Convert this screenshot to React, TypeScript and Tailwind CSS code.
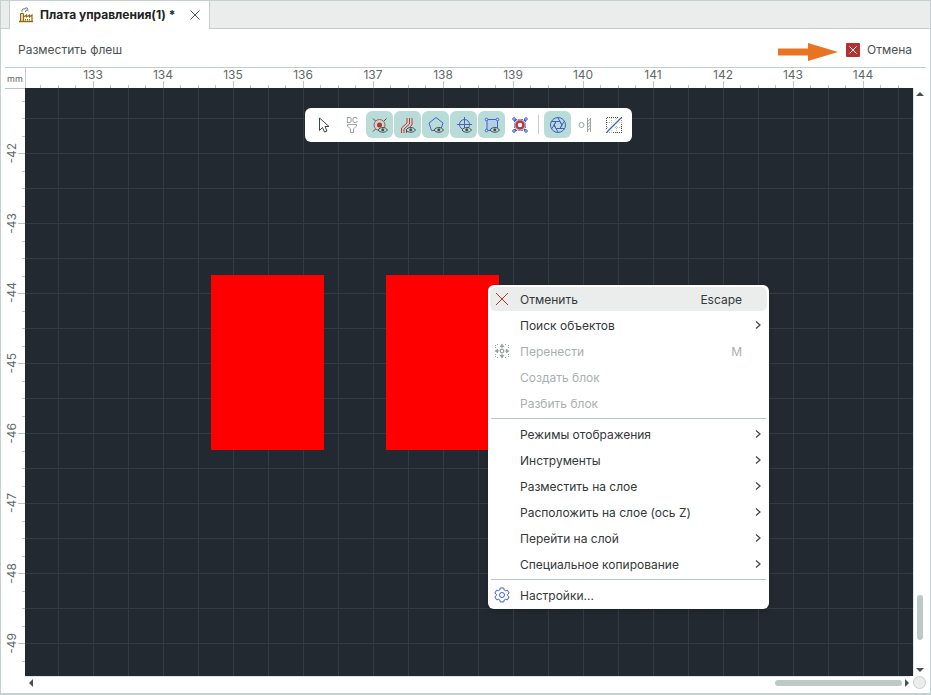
import React from 'react';

const columns = ['133', '134', '135', '136', '137', '138', '139', '140', '141', '142', '143', '144', ''];
const rows = ['-42', '-43', '-44', '-45', '-46', '-47', '-48', '-49'];

const searchItems = [
  { label: 'Отменить', shortcut: 'Escape', icon: <CancelIcon />, active: true },
  { label: 'Поиск объектов', submenu: true },
  { label: 'Перенести', shortcut: 'M', icon: <MoveIcon />, disabled: true },
  { label: 'Создать блок', disabled: true },
  { label: 'Разбить блок', disabled: true },
];

const layerItems = [
  { label: 'Режимы отображения', submenu: true },
  { label: 'Инструменты', submenu: true },
  { label: 'Разместить на слое', submenu: true },
  { label: 'Расположить на слое (ось Z)', submenu: true },
  { label: 'Перейти на слой', submenu: true },
  { label: 'Специальное копирование', submenu: true },
];

const settingsItems = [{ label: 'Настройки...', icon: <GearIcon /> }];

const tools = [
  { label: 'Выбор', icon: <CursorIcon /> },
  { label: 'Фильтр DC', icon: <FilterIcon /> },
  { label: 'Контактные площадки', icon: <PadIcon />, on: true },
  { label: 'Трассы', icon: <TracksIcon />, on: true },
  { label: 'Полигоны', icon: <PolygonIcon />, on: true },
  { label: 'Отверстия', icon: <CrosshairIcon />, on: true },
  { label: 'Области', icon: <AreaIcon />, on: true },
  { label: 'Привязка', icon: <SnapIcon /> },
];

const viewTools = [
  { label: 'Апертура', icon: <ApertureIcon />, on: true },
  { label: 'Зазоры', icon: <GapIcon /> },
  { label: 'Сетка', icon: <GridOffIcon /> },
];

function FactoryIcon() {
  return (
    <svg width="16" height="16" viewBox="0 0 16 16" fill="none">
      <path d="M4 4.500C3.500 2.500 5 1.500 6.500 2 7.500.3 9.500.5 10 2.500M7.500 5c0-2 2-2.500 3-1" stroke="#56605f" />
      <path d="M2.500 14V6.500h3V14" fill="#ead7a8" stroke="#94690f" />
      <path d="M1 14.500h14" stroke="#94690f" strokeWidth="1.500" />
      <path d="M5.500 10 8.500 8v2l3-2v2l2.500-2V14" stroke="#94690f" strokeWidth="1.200" />
      <path d="M7.500 12v1.500M9.500 12v1.500M11.500 12v1.500" stroke="#94690f" />
    </svg>
  );
}

function CloseIcon() {
  return (
    <svg width="10" height="10" viewBox="0 0 10 10" stroke="#4c5655">
      <path d="m.5.5 9 9M9.500.5l-9 9" />
    </svg>
  );
}

function CancelIcon() {
  return (
    <svg width="14" height="14" viewBox="0 0 14 14" stroke="#b8312f">
      <path d="m1 1 12 12M13 1 1 13" />
    </svg>
  );
}

function MoveIcon() {
  return (
    <svg width="16" height="16" viewBox="0 0 16 16" fill="#98a3a2">
      <path d="M8 .5 10.500 4H8.500v1.500h-1V4h-2zM8 15.500 10.500 12H8.500v-1.500h-1V12h-2zM.5 8 4 5.500v2h1.500v1H4v2zM15.500 8 12 5.500v2h-1.500v1H12v2z" />
      <path d="M6.500 6.500h3v3h-3z" fill="none" stroke="#98a3a2" />
      <path d="M1.500 5V1M3 1.500h2M11 1.500h2M14.500 5V1M1.500 11v4M3 14.500h2M11 14.500h2M14.500 11v4" fill="none" stroke="#98a3a2" strokeDasharray="1 1" />
    </svg>
  );
}

function GearIcon() {
  return (
    <svg width="16" height="16" viewBox="0 0 16 16" fill="none" stroke="#4360cc">
      <path d="M6.300 1h3.400l.5 2 1.200.7 2-.6 1.700 3-1.500 1.400v1l1.500 1.400-1.700 3-2-.6-1.200.7-.5 2H6.300l-.5-2-1.200-.7-2 .6-1.700-3 1.500-1.400v-1L.9 6.100l1.700-3 2 .6 1.200-.7z" strokeLinejoin="round" />
      <circle cx="8" cy="8" r="2.500" />
    </svg>
  );
}

function ChevronIcon() {
  return (
    <svg width="6" height="8" viewBox="0 0 6 8" fill="none" stroke="#3c4645" strokeWidth="1.200">
      <path d="m1 .5 4 3.500-4 3.500" />
    </svg>
  );
}

function Eye() {
  return (
    <g>
      <path d="M7 14c2.200-3.400 7.300-3.400 9.500 0-2.200 3-7.300 3-9.500 0z" fill="#b9dcd8" stroke="#46504f" />
      <circle cx="11.750" cy="13.800" r="1.500" fill="#46504f" stroke="none" />
    </g>
  );
}

function CursorIcon() {
  return (
    <svg width="18" height="18" viewBox="0 0 18 18" fill="none" stroke="#3c4645">
      <path d="M4.500 2v12.500l3-3 2 4.500 2.500-1-2-4.500h4z" />
    </svg>
  );
}

function FilterIcon() {
  return (
    <svg width="18" height="18" viewBox="0 0 18 18" fill="none" stroke="#98a3a2">
      <text x="9" y="7" textAnchor="middle" fontSize="8" fill="#7f8a89" stroke="none">DC</text>
      <path d="M4.500 8.500h9V10l-3 3v3.500h-3V13l-3-3z" />
    </svg>
  );
}

function PadIcon() {
  return (
    <svg width="18" height="18" viewBox="0 0 18 18" fill="none">
      <path d="m2 2.500 2.500 2.500M15.500 2.500 13 5M2 15.500 4.500 13" stroke="#46504f" />
      <circle cx="8.500" cy="9" r="5.500" stroke="#c0504c" />
      <circle cx="8.500" cy="9" r="2.500" fill="#c92a28" />
      <Eye />
    </svg>
  );
}

function TracksIcon() {
  return (
    <svg width="18" height="18" viewBox="0 0 18 18" fill="none" stroke="#c03a37">
      <path d="M2.500 17v-5l5.500-5V2M5 17v-4l5.500-5V2M7.500 17v-3L13 9V2" />
      <Eye />
    </svg>
  );
}

function PolygonIcon() {
  return (
    <svg width="18" height="18" viewBox="0 0 18 18" fill="none" stroke="#4360cc">
      <path d="M9 1.500 16 7l-2.500 7.500h-9L2 7z" />
      <Eye />
    </svg>
  );
}

function CrosshairIcon() {
  return (
    <svg width="18" height="18" viewBox="0 0 18 18" fill="none" stroke="#4360cc">
      <circle cx="9.500" cy="8.500" r="5" />
      <path d="M9.500 1v14M2 8.500h15" />
      <Eye />
    </svg>
  );
}

function AreaIcon() {
  return (
    <svg width="18" height="18" viewBox="0 0 18 18" fill="none" stroke="#4360cc">
      <path d="M4 3.500h10.500v11H4z" fill="#afd0e6" />
      <g fill="#dbe8f5">
        <circle cx="3.500" cy="3.500" r="1.300" />
        <circle cx="14.500" cy="3.500" r="1.300" />
        <circle cx="3.500" cy="14.500" r="1.300" />
      </g>
      <Eye />
    </svg>
  );
}

function SnapIcon() {
  return (
    <svg width="18" height="18" viewBox="0 0 18 18" fill="none" stroke="#4360cc">
      <path d="m3 3 12 12M15 3 3 15" />
      <path d="M4 3.500h10M4 14.500h10M3.500 4v10M14.500 4v10" strokeDasharray="2 1" />
      <g fill="#dbe3f7">
        <circle cx="3" cy="3" r="1.300" />
        <circle cx="15" cy="3" r="1.300" />
        <circle cx="3" cy="15" r="1.300" />
        <circle cx="15" cy="15" r="1.300" />
      </g>
      <circle cx="9" cy="9" r="5.500" fill="#e3e8f7" stroke="#8fa0de" />
      <circle cx="9" cy="9" r="3.500" fill="#fff" stroke="#c23230" strokeWidth="2.500" />
    </svg>
  );
}

function ApertureIcon() {
  return (
    <svg width="18" height="18" viewBox="0 0 18 18" fill="none" stroke="#3f5fc4">
      <circle cx="9" cy="9" r="7.500" />
      <path d="M7 5.500h4L13 9l-2 3.500H7L5 9z" />
      <path d="M11 5.500H3M13 9 9 2M11 12.500 15 5.500M7 12.500h8M5 9l4 7M7 5.500 3 12.500" />
    </svg>
  );
}

function GapIcon() {
  return (
    <svg width="18" height="18" viewBox="0 0 18 18" fill="none" stroke="#98a3a2">
      <circle cx="4.500" cy="9" r="2.500" />
      <path d="M10.500 2v14M13.500 2v14" />
      <path d="m10.500 5.500 3-2.500m-3 5.500 3-2.500m-3 5.500 3-2.500m-3 5.500 3-2.500" />
    </svg>
  );
}

function GridOffIcon() {
  return (
    <svg width="18" height="18" viewBox="0 0 18 18" fill="none">
      <path d="M2 1.500h15M2 16.500h15M1.500 2v15M16.500 2v15" stroke="#46504f" strokeDasharray="1 1" />
      <path d="M2 6.500h15M2 11.500h15M6.500 2v15M11.500 2v15" stroke="#b4bbba" strokeDasharray="1 1" />
      <path d="M2 16 16 2" stroke="#fff" strokeWidth="4" />
      <path d="M2 16 16 2" stroke="#4360cc" strokeWidth="1.300" />
    </svg>
  );
}

function ToolButton({ tool }: { tool: any }) {
  return (
    <button
      type="button"
      aria-label={tool.label}
      className={`flex size-[27px] items-center justify-center rounded-md ${tool.on ? 'bg-[#b9dcd8]' : ''}`}
    >
      {tool.icon}
    </button>
  );
}

function MenuItem({ item }: { item: any }) {
  return (
    <button
      type="button"
      role="menuitem"
      disabled={item.disabled}
      className={`flex h-6 w-full items-center rounded-md pr-[6px] text-left ${item.active ? 'bg-[#ebedec]' : ''} ${item.disabled ? 'text-[#a8b0af]' : 'text-[#333838]'}`}
    >
      <span className="flex w-6 justify-center">{item.icon}</span>
      <span className="ml-1.5 flex-1 pt-px">{item.label}</span>
      {item.shortcut && <span className="mr-[13px] pt-px">{item.shortcut}</span>}
      <span className="w-1.5">{item.submenu && <ChevronIcon />}</span>
    </button>
  );
}

function ContextMenu() {
  return (
    <div role="menu" className="absolute top-[197px] left-[463px] flex w-[281px] flex-col gap-0.5 rounded-md bg-white p-0.5 text-[12px] leading-5 shadow-md">
      {searchItems.map((item) => (
        <MenuItem key={item.label} item={item} />
      ))}
      <hr className="mx-px my-px border-[#b9c7c5]" />
      {layerItems.map((item) => (
        <MenuItem key={item.label} item={item} />
      ))}
      <hr className="mx-px my-px border-[#b9c7c5]" />
      {settingsItems.map((item) => (
        <MenuItem key={item.label} item={item} />
      ))}
    </div>
  );
}

function TopRuler() {
  return (
    <div className="flex h-[20px] min-w-0 flex-1 overflow-hidden border-l border-[#c3cfce]">
      <svg className="h-5 w-8 shrink-0" stroke="#b9c7c5">
        <path d="M14.500 17v3" />
      </svg>
      {columns.map((label) => (
        <div key={label} className="flex w-[70px] shrink-0 flex-col items-center justify-between">
          <span className="h-3 pt-px leading-3">{label}</span>
          <svg className="h-[7px] w-full shrink-0" stroke="#b9c7c5">
            <path d="M.5 4v3M17.500 4v3M35.500 0v7M52.500 4v3" />
          </svg>
        </div>
      ))}
    </div>
  );
}

function LeftRuler() {
  return (
    <div className="flex w-6 shrink-0 flex-col overflow-hidden">
      <svg className="h-[30px] w-full shrink-0" stroke="#b9c7c5">
        <path d="M4 .5h20M21 13.500h3" />
      </svg>
      {rows.map((label) => (
        <div key={label} className="flex h-[70px] shrink-0 items-center justify-end">
          <span className="rotate-180 leading-3 [writing-mode:vertical-rl]">{label}</span>
          <svg className="h-full w-[7px] shrink-0" stroke="#b9c7c5">
            <path d="M4 .5h3M4 18.500h3M0 35.500h7M4 53.500h3" />
          </svg>
        </div>
      ))}
    </div>
  );
}

function Canvas() {
  return (
    <main className="relative min-w-0 flex-1 overflow-hidden bg-[#222930] bg-[linear-gradient(to_right,#343c43_1px,transparent_1px),linear-gradient(to_bottom,#343c43_1px,transparent_1px)] bg-[size:35px_35px] bg-[position:33px_30px]">
      <div className="absolute top-[187px] left-[186px] h-[175px] w-[113px] bg-[#ff0000]" />
      <div className="absolute top-[187px] left-[361px] h-[175px] w-[113px] bg-[#ff0000]" />
      <div className="absolute inset-x-0 top-5 flex justify-center pr-px">
        <div role="toolbar" className="flex gap-px rounded-md bg-white px-[5px] pt-[3px] pb-1">
          {tools.map((tool) => (
            <ToolButton key={tool.label} tool={tool} />
          ))}
          <div className="mx-1 my-1 w-px bg-[#c3cfce]" />
          {viewTools.map((tool) => (
            <ToolButton key={tool.label} tool={tool} />
          ))}
        </div>
      </div>
      <ContextMenu />
    </main>
  );
}

export default function App() {
  return (
    <div className="flex h-screen w-full flex-col border border-b-2 border-[#c5d1d0] bg-white font-['Inter','Liberation_Sans',sans-serif] text-[12px] text-[#4a5352]">
      <header className="flex h-7 shrink-0 bg-[#ebedec]">
        <div className="w-2 border-b border-[#c3cfce]" />
        <div className="flex items-center border-x border-[#c3cfce] bg-white px-2">
          <FactoryIcon />
          <span className="ml-1.5 font-bold text-[#1d2222]">Плата управления(1) *</span>
          <button type="button" aria-label="Закрыть" className="mr-px ml-[15px]">
            <CloseIcon />
          </button>
        </div>
        <div className="flex-1 border-b border-[#c3cfce]" />
      </header>

      <div className="mx-1 flex h-[39px] shrink-0 items-center border-b border-[#c3cfce] pt-1 pr-3.5 pl-[13px]">
        <span className="flex-1">Разместить флеш</span>
        <svg width="60" height="18" viewBox="0 0 60 18" fill="#e87422" className="mt-1 mr-2">
          <path d="M0 5.500h30V0l30 9-30 9v-5.500H0z" />
        </svg>
        <button type="button" className="flex items-center gap-[7px]">
          <svg width="14" height="14" viewBox="0 0 14 14" stroke="#fff">
            <rect width="14" height="14" rx="1" fill="#b23230" stroke="none" />
            <path d="m3.500 3.500 7 7M10.500 3.500l-7 7" />
          </svg>
          <span>Отмена</span>
        </button>
      </div>

      <div className="flex shrink-0 pr-4 text-[#5f6968]">
        <div className="w-6 pt-[3px] pl-1 text-center text-[9px] leading-4">mm</div>
        <TopRuler />
      </div>

      <div className="flex min-h-0 flex-1">
        <div className="flex text-[#5f6968]">
          <LeftRuler />
        </div>
        <Canvas />
        <div className="flex w-[17px] shrink-0 flex-col items-center border-l border-[#dfe6e5] pr-1">
          <svg width="8" height="4" viewBox="0 0 8 4" fill="#46504f" className="mt-1">
            <path d="M4 0 8 4H0z" />
          </svg>
          <div className="flex-1" />
          <div className="h-[45px] w-1.5 rounded-full bg-[#bdc8c7]" />
          <svg width="8" height="4" viewBox="0 0 8 4" fill="#46504f" className="mt-7 mb-1">
            <path d="M0 0h8L4 4z" />
          </svg>
        </div>
      </div>

      <div className="flex h-[17px] shrink-0 pl-6">
        <div className="flex flex-1 items-center border-t border-[#dfe6e5] pb-1 pl-1">
          <svg width="4" height="8" viewBox="0 0 4 8" fill="#46504f">
            <path d="M4 0v8L0 4z" />
          </svg>
          <div className="flex-1" />
          <div className="h-1.5 w-[127px] rounded-full bg-[#bdc8c7]" />
          <svg width="4" height="8" viewBox="0 0 4 8" fill="#46504f" className="mr-px ml-[3px]">
            <path d="M0 0v8l4-4z" />
          </svg>
        </div>
        <div className="mr-1 ml-[3px] size-[13px] rounded-full border border-[#c3cfce] bg-[#ebedec]" />
      </div>
    </div>
  );
}
